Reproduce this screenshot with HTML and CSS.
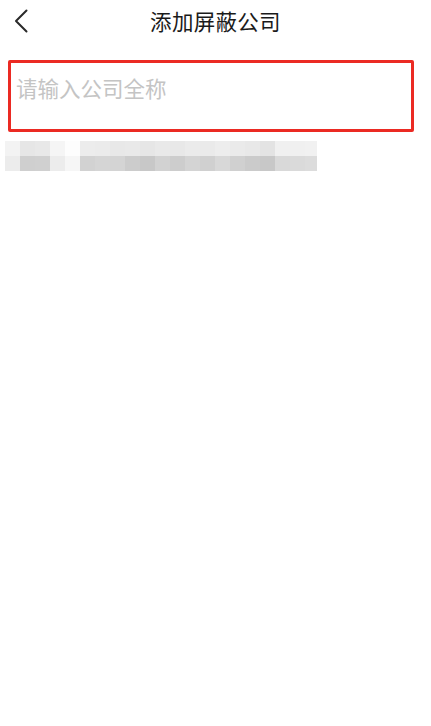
FILE: index.html
```html
<!DOCTYPE html>
<html lang="zh">
<head>
<meta charset="utf-8">
<link rel="stylesheet" href="styles.css">
</head>
<body>
<div class="page">
  <header class="topbar">
    <button class="back" aria-label="返回">
      <svg width="14" height="24" viewBox="0 0 14 24"><path d="M12.5 1.5 L2 12 L12.5 22.5" fill="none" stroke="#2a2a2a" stroke-width="2" stroke-linecap="round" stroke-linejoin="round"/></svg>
    </button>
    <h1 class="title">添加屏蔽公司</h1>
  </header>
  <div class="search">
    <div class="placeholder">请输入公司全称</div>
  </div>
  <div class="mosaic">
    <span class="c f3"></span><span class="c e6"></span><span class="c e8"></span><span class="c f5"></span><span class="c fd"></span><span class="c ec"></span><span class="c eb"></span><span class="c e8"></span><span class="c e9"></span><span class="c e6"></span><span class="c e9"></span><span class="c e8"></span><span class="c eb"></span><span class="c ea"></span><span class="c ed"></span><span class="c ea"></span><span class="c e8"></span><span class="c e3"></span><span class="c f0"></span><span class="c f0"></span><span class="c f1"></span>
    <span class="c ec"></span><span class="c cf"></span><span class="c d0"></span><span class="c ec"></span><span class="c f6"></span><span class="c d2"></span><span class="c d5"></span><span class="c d4"></span><span class="c cc"></span><span class="c c8"></span><span class="c d2"></span><span class="c cd"></span><span class="c d4"></span><span class="c d0"></span><span class="c d8"></span><span class="c d0"></span><span class="c cb"></span><span class="c c8"></span><span class="c d9"></span><span class="c da"></span><span class="c dc"></span>
  </div>
</div>
</body>
</html>
```
FILE: styles.css
```css
html, body {
  margin: 0;
  padding: 0;
  background: #ffffff;
}
body {
  font-family: "Noto Sans CJK SC", "Noto Sans", sans-serif;
  width: 431px;
  height: 726px;
  overflow: hidden;
}
.page {
  display: flex;
  flex-direction: column;
}
.topbar {
  height: 44px;
  display: flex;
  align-items: center;
  justify-content: center;
  position: relative;
}
.back {
  position: absolute;
  left: 14px;
  top: 9px;
  border: 0;
  background: none;
  padding: 0;
  width: 14px;
  height: 24px;
  display: flex;
}
.title {
  margin: 0 0 4px 0;
  font-size: 21.5px;
  font-weight: 400;
  color: #1a1a1a;
  letter-spacing: 0.3px;
}
.search {
  margin: 16px 0 0 8px;
  height: 66px;
  border: 3px solid #eb2a23;
  border-radius: 2px;
  padding-left: 5px;
  box-sizing: content-box;
  width: 395px;
}
.placeholder {
  font-size: 21.5px;
  color: #c4c4c4;
  line-height: 30px;
  padding-top: 10px;
}
.mosaic {
  margin: 9px 0 0 5px;
  display: grid;
  grid-template-columns: repeat(20, 15px) 12px;
  grid-template-rows: 15px 15px;
  filter: blur(0.6px);
}
.c { display: block; }
.f3 { background: #f3f3f3; }
.e6 { background: #e6e6e6; }
.e8 { background: #e8e8e8; }
.f5 { background: #f5f5f5; }
.fd { background: #fdfdfd; }
.ec { background: #ececec; }
.eb { background: #ebebeb; }
.e9 { background: #e9e9e9; }
.ea { background: #eaeaea; }
.ed { background: #ededed; }
.e3 { background: #e3e3e3; }
.f0 { background: #f0f0f0; }
.f1 { background: #f1f1f1; }
.cf { background: #cfcfcf; }
.d0 { background: #d0d0d0; }
.f6 { background: #f6f6f6; }
.d2 { background: #d2d2d2; }
.d5 { background: #d5d5d5; }
.d4 { background: #d4d4d4; }
.cc { background: #cccccc; }
.c8 { background: #c8c8c8; }
.cd { background: #cdcdcd; }
.d8 { background: #d8d8d8; }
.cb { background: #cbcbcb; }
.d9 { background: #d9d9d9; }
.da { background: #dadada; }
.dc { background: #dcdcdc; }
```
